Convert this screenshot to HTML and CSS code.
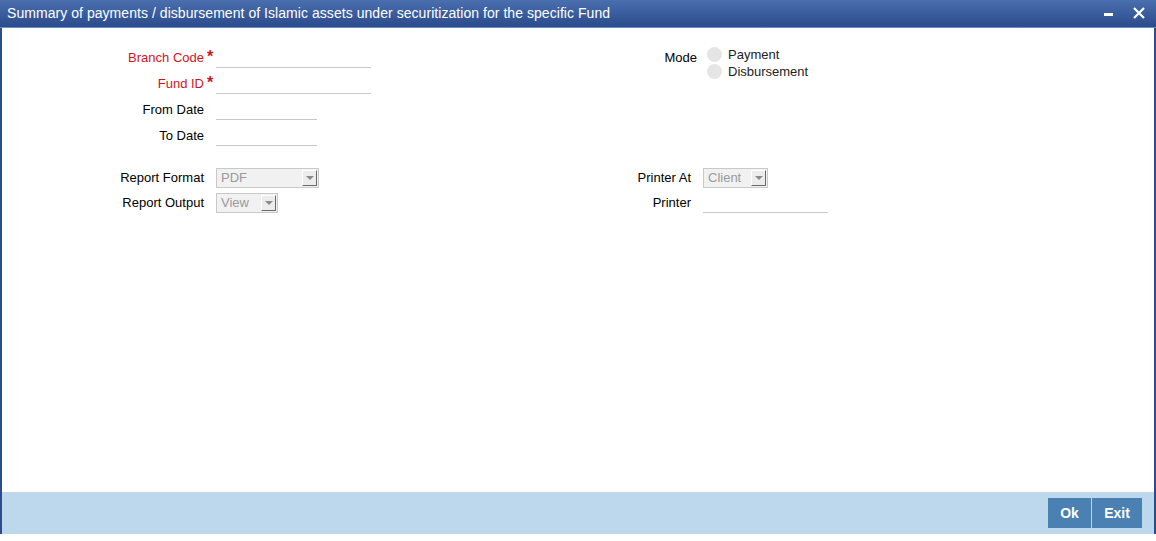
FILE: index.html
```html
<!DOCTYPE html>
<html>
<head>
<meta charset="utf-8">
<link rel="stylesheet" href="styles.css">
</head>
<body>
<div class="window">
  <div class="titlebar">
    <span class="title">Summary of payments / disbursement of Islamic assets under securitization for the specific Fund</span>
    <div class="winbtns">
      <svg class="ic-min" width="12" height="12" viewBox="0 0 12 12"><rect x="1" y="5" width="9" height="3" fill="#fff"/></svg>
      <svg class="ic-close" width="14" height="14" viewBox="0 0 14 14"><path d="M2 2 L12 12 M12 2 L2 12" stroke="#fff" stroke-width="2.2"/></svg>
    </div>
  </div>
  <div class="content">
    <div class="section top">
      <div class="col left">
        <div class="row"><label class="lbl req">Branch Code</label><span class="ast">*</span><span class="inp w155"></span></div>
        <div class="row"><label class="lbl req">Fund ID</label><span class="ast">*</span><span class="inp w155"></span></div>
        <div class="row"><label class="lbl">From Date</label><span class="ast"></span><span class="inp w101"></span></div>
        <div class="row"><label class="lbl">To Date</label><span class="ast"></span><span class="inp w101"></span></div>
      </div>
      <div class="col right">
        <div class="moderow">
          <label class="lbl mode">Mode</label>
          <div class="radios">
            <div class="radio"><span class="dot"></span><span>Payment</span></div>
            <div class="radio"><span class="dot"></span><span>Disbursement</span></div>
          </div>
        </div>
      </div>
    </div>
    <div class="section bottom">
      <div class="col left">
        <div class="row2"><label class="lbl">Report Format</label><span class="ast"></span><span class="sel w103"><span class="val">PDF</span><span class="arr"></span></span></div>
        <div class="row2"><label class="lbl">Report Output</label><span class="ast"></span><span class="sel w62"><span class="val">View</span><span class="arr"></span></span></div>
      </div>
      <div class="col right">
        <div class="row2"><label class="lbl pr">Printer At</label><span class="sel w65"><span class="val">Client</span><span class="arr"></span></span></div>
        <div class="row2"><label class="lbl pr">Printer</label><span class="inp w125"></span></div>
      </div>
    </div>
  </div>
  <div class="footer">
    <button class="btn ok">Ok</button>
    <button class="btn exit">Exit</button>
  </div>
</div>
</body>
</html>
```

FILE: styles.css
```css
html, body {
  margin: 0;
  padding: 0;
  background: #fff;
}
body {
  font-family: "Liberation Sans", Arial, sans-serif;
  font-size: 13px;
  color: #000;
}
.window {
  width: 1156px;
  height: 534px;
  box-sizing: border-box;
  border-left: 2px solid #2c4c8c;
  border-right: 2px solid #2c4c8c;
  display: flex;
  flex-direction: column;
}
.titlebar {
  height: 28px;
  margin: 0 -2px;
  box-sizing: border-box;
  background: linear-gradient(#4a6fae, #2a4b8c);
  border-bottom: 1px solid #6f8fc0;
  display: flex;
  align-items: center;
  justify-content: space-between;
  padding: 0 10px 2px 7px;
}
.title {
  color: #fff;
  font-size: 14px;
  letter-spacing: 0.05px;
}
.winbtns {
  display: flex;
  align-items: center;
  gap: 17px;
}
.ic-min { margin-top: 2px; }
.content {
  flex: 1;
  padding-top: 16px;
}
.section {
  display: flex;
}
.col.left {
  width: 600px;
}
.col.right {
  flex: 1;
}
.row {
  height: 26px;
  display: flex;
  align-items: center;
}
.row2 {
  height: 25px;
  display: flex;
  align-items: center;
}
.lbl {
  width: 202px;
  text-align: right;
  display: inline-block;
}
.lbl.req { color: #d0141e; }
.ast {
  width: 12px;
  color: #d0141e;
  font-size: 16px;
  font-weight: bold;
  padding-left: 3px;
  box-sizing: border-box;
  line-height: 17px;
  height: 17px;
  margin-top: -2px;
}
.inp {
  display: inline-block;
  height: 20px;
  border-bottom: 1px solid #c8c8c8;
  margin-top: 0;
}
.w155 { width: 155px; }
.w101 { width: 101px; }
.w125 { width: 125px; }
.bottom {
  margin-top: 17px;
}
.moderow {
  display: flex;
}
.lbl.mode {
  width: 95px;
  padding-top: 6px;
}
.radios {
  margin-left: 10px;
  margin-top: 2px;
}
.radio {
  height: 17px;
  display: flex;
  align-items: center;
  gap: 6px;
}
.dot {
  width: 15px;
  height: 15px;
  border-radius: 50%;
  background: #e5e5e5;
  display: inline-block;
}
.radio span:last-child {
  color: #222;
}
.lbl.pr {
  width: 89px;
  margin-right: 12px;
}
.sel {
  display: inline-flex;
  align-items: center;
  justify-content: space-between;
  height: 20px;
  box-sizing: border-box;
  border: 1px solid #c9c9c9;
  background: #f1f1f1;
  color: #9a9a9a;
  padding: 0 1px 0 4px;
}
.w103 { width: 103px; }
.w62 { width: 62px; }
.w65 { width: 65px; }
.arr {
  width: 15px;
  height: 16px;
  box-sizing: border-box;
  border-top: 1px solid #fff;
  border-left: 1px solid #fff;
  border-right: 1px solid #6a6a6a;
  border-bottom: 1px solid #6a6a6a;
  background: #ececec;
  position: relative;
}
.arr::after {
  content: "";
  position: absolute;
  left: 3px;
  top: 5px;
  border-left: 4px solid transparent;
  border-right: 4px solid transparent;
  border-top: 4px solid #8a8a8a;
}
.footer {
  height: 42px;
  background: #bdd8ec;
  display: flex;
  justify-content: flex-end;
  align-items: center;
  gap: 1px;
  padding-right: 12px;
}
.btn {
  height: 30px;
  border: none;
  background: #4a80b2;
  color: #fff;
  font-family: "Liberation Sans", Arial, sans-serif;
  font-weight: bold;
  font-size: 14px;
  padding: 0;
}
.btn.ok { width: 43px; }
.btn.exit { width: 50px; }
```
